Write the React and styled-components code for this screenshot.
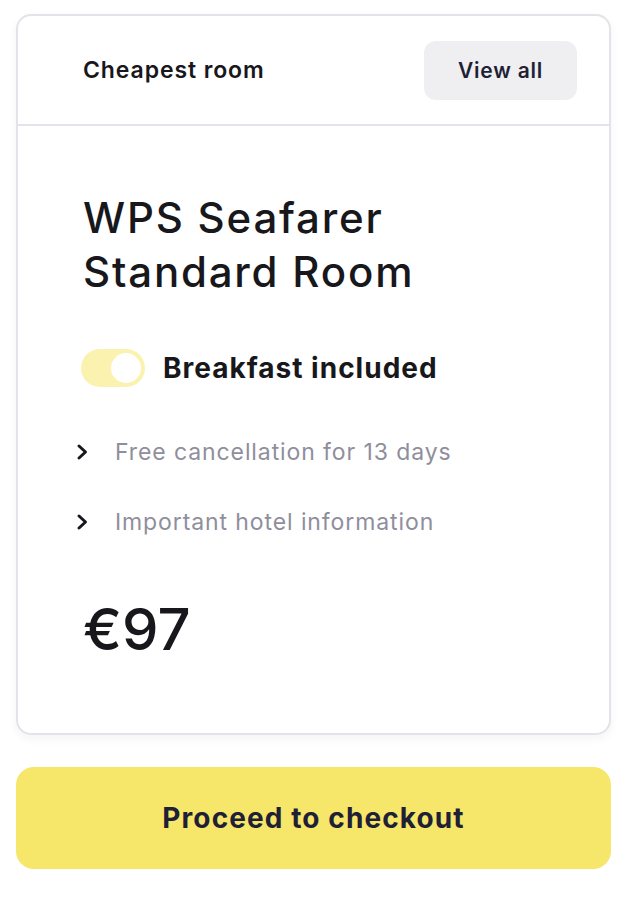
import React from "react";
import styled, { createGlobalStyle } from "styled-components";

const GlobalStyle = createGlobalStyle`
  body {
    margin: 0;
    background: #fff;
    font-family: "Inter", "Noto Sans", sans-serif;
    -webkit-font-smoothing: antialiased;
  }
`;

const Page = styled.div`
  width: 595px;
  padding: 14px 11px 30px 16px;
  display: flex;
  flex-direction: column;
  gap: 32px;
`;

const Card = styled.div`
  border: 2px solid #e3e3e9;
  border-radius: 15px;
  background: #fff;
  box-shadow: 0 4px 10px rgba(30, 30, 60, 0.05);
  display: flex;
  flex-direction: column;
`;

const Header = styled.div`
  height: 108px;
  display: flex;
  align-items: center;
  justify-content: space-between;
  padding: 0 32px 0 65px;
  border-bottom: 2px solid #e3e3e9;
`;

const HeaderTitle = styled.h3`
  margin: 0;
  font-size: 23px;
  font-weight: 600;
  letter-spacing: 0.9px;
  color: #17171c;
`;

const GhostButton = styled.button`
  border: 0;
  background: #efeff2;
  border-radius: 12px;
  width: 153px;
  height: 59px;
  font-family: inherit;
  font-size: 21px;
  font-weight: 600;
  letter-spacing: 0.8px;
  color: #1f1f35;
`;

const Body = styled.div`
  padding: 65px 32px 72px 65px;
  display: flex;
  flex-direction: column;
`;

const RoomName = styled.h1`
  margin: 0;
  font-size: 42px;
  line-height: 54px;
  font-weight: 500;
  letter-spacing: 1.8px;
  color: #17171c;
`;

const ToggleRow = styled.label`
  display: flex;
  align-items: center;
  gap: 18px;
  margin-top: 50px;
`;

const Switch = styled.span`
  width: 64px;
  height: 38px;
  border-radius: 19px;
  background: #fbf2b0;
  display: flex;
  align-items: center;
  justify-content: ${(p) => (p.$on ? "flex-end" : "flex-start")};
  padding: 0 4px;
  box-sizing: border-box;
  margin-left: -2px;
`;

const Knob = styled.span`
  width: 30px;
  height: 30px;
  border-radius: 50%;
  background: #fff;
`;

const ToggleLabel = styled.span`
  font-size: 28px;
  font-weight: 700;
  letter-spacing: 1px;
  color: #17171c;
`;

const InfoList = styled.ul`
  list-style: none;
  margin: 50px 0 0;
  padding: 0;
  display: flex;
  flex-direction: column;
  gap: 40px;
`;

const InfoItem = styled.li`
  display: flex;
  align-items: center;
  gap: 24px;
  height: 30px;
  font-size: 23px;
  letter-spacing: 0.9px;
  color: #8f8e9c;
  margin-left: -8px;
`;

const Price = styled.div`
  margin-top: 60px;
  font-size: 58px;
  font-weight: 500;
  color: #17171c;
  line-height: 64px;
`;

const CheckoutButton = styled.button`
  border: 0;
  width: 100%;
  height: 102px;
  border-radius: 18px;
  background: #f6e66a;
  font-family: inherit;
  font-size: 28px;
  font-weight: 700;
  letter-spacing: 1.1px;
  color: #1f1f35;
`;

const Chevron = () => (
  <svg width="16" height="18" viewBox="0 0 16 18" fill="none">
    <path d="M4 3 L10.5 9 L4 15" stroke="#17171c" strokeWidth="3" strokeLinecap="round" strokeLinejoin="round" />
  </svg>
);

export default function App() {
  const info = ["Free cancellation for 13 days", "Important hotel information"];
  return (
    <>
      <GlobalStyle />
      <Page>
        <Card>
          <Header>
            <HeaderTitle>Cheapest room</HeaderTitle>
            <GhostButton>View all</GhostButton>
          </Header>
          <Body>
            <RoomName>
              WPS Seafarer
              <br />
              Standard Room
            </RoomName>
            <ToggleRow>
              <Switch $on>
                <Knob />
              </Switch>
              <ToggleLabel>Breakfast included</ToggleLabel>
            </ToggleRow>
            <InfoList>
              {info.map((t) => (
                <InfoItem key={t}>
                  <Chevron />
                  {t}
                </InfoItem>
              ))}
            </InfoList>
            <Price>€97</Price>
          </Body>
        </Card>
        <CheckoutButton>Proceed to checkout</CheckoutButton>
      </Page>
    </>
  );
}
